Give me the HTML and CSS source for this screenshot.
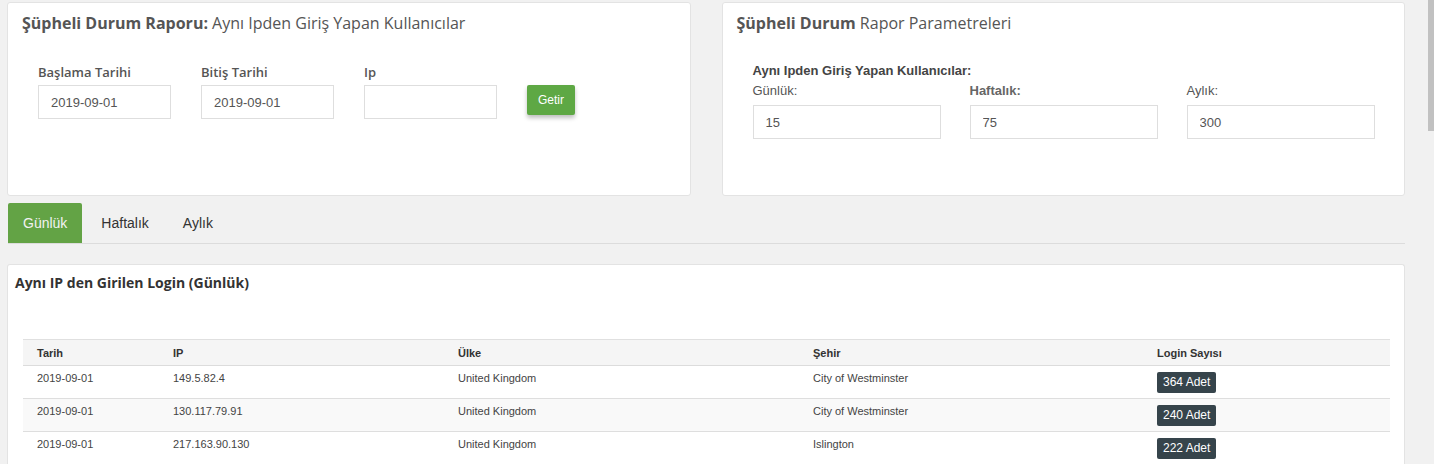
FILE: index.html
```html
<!DOCTYPE html>
<html lang="tr">
<head>
<meta charset="utf-8">
<title>Şüpheli Durum Raporu</title>
<link rel="stylesheet" href="styles.css">
</head>
<body>
  <div class="page">
    <div class="main">
      <div class="top-row">
        <div class="panel">
          <h3 class="panel-title"><strong>Şüpheli Durum Raporu:</strong> Aynı Ipden Giriş Yapan Kullanıcılar</h3>
          <form class="filter-form">
            <div class="form-group">
              <label for="start">Başlama Tarihi</label>
              <input type="text" id="start" value="2019-09-01">
            </div>
            <div class="form-group">
              <label for="end">Bitiş Tarihi</label>
              <input type="text" id="end" value="2019-09-01">
            </div>
            <div class="form-group">
              <label for="ip">Ip</label>
              <input type="text" id="ip" value="">
            </div>
            <button type="button" class="btn-getir">Getir</button>
          </form>
        </div>

        <div class="panel">
          <h3 class="panel-title"><strong>Şüpheli Durum</strong> Rapor Parametreleri</h3>
          <div class="params">
            <div class="params-title">Aynı Ipden Giriş Yapan Kullanıcılar:</div>
            <div class="params-row">
              <div class="param">
                <label for="daily">Günlük:</label>
                <input type="text" id="daily" value="15">
              </div>
              <div class="param">
                <label for="weekly" class="strong">Haftalık:</label>
                <input type="text" id="weekly" value="75">
              </div>
              <div class="param">
                <label for="monthly">Aylık:</label>
                <input type="text" id="monthly" value="300">
              </div>
            </div>
          </div>
        </div>
      </div>

      <ul class="tabs">
        <li class="active"><a href="#">Günlük</a></li>
        <li><a href="#">Haftalık</a></li>
        <li><a href="#">Aylık</a></li>
      </ul>

      <div class="panel table-panel">
        <h4 class="table-title">Aynı IP den Girilen Login (Günlük)</h4>
        <table class="report">
          <thead>
            <tr>
              <th class="c-date">Tarih</th>
              <th class="c-ip">IP</th>
              <th class="c-country">Ülke</th>
              <th class="c-city">Şehir</th>
              <th>Login Sayısı</th>
            </tr>
          </thead>
          <tbody>
            <tr>
              <td>2019-09-01</td>
              <td>149.5.82.4</td>
              <td>United Kingdom</td>
              <td>City of Westminster</td>
              <td><span class="badge">364 Adet</span></td>
            </tr>
            <tr>
              <td>2019-09-01</td>
              <td>130.117.79.91</td>
              <td>United Kingdom</td>
              <td>City of Westminster</td>
              <td><span class="badge">240 Adet</span></td>
            </tr>
            <tr>
              <td>2019-09-01</td>
              <td>217.163.90.130</td>
              <td>United Kingdom</td>
              <td>Islington</td>
              <td><span class="badge">222 Adet</span></td>
            </tr>
          </tbody>
        </table>
      </div>
    </div>
    <div class="scrollbar"><div class="thumb"></div></div>
  </div>
</body>
</html>
```
FILE: styles.css
```css
body {
    margin: 0;
    background-color: #f1f1f1;
    font-family: "Liberation Sans", Arial, sans-serif;
    color: #555;
}

.page {
    display: flex;
    height: 464px;
    overflow: hidden;
}

.main {
    flex: 1;
    padding: 2px 23px 0 7px;
}

.scrollbar {
    width: 6px;
    background-color: #f1f1f1;
}

.scrollbar .thumb {
    height: 131px;
    background-color: #c1c1c1;
}

.top-row {
    display: flex;
    gap: 31px;
}

.panel {
    background-color: #fff;
    border: 1px solid #e3e3e3;
    border-radius: 3px;
    box-sizing: border-box;
}

.top-row .panel {
    flex: 1;
    height: 194px;
    padding: 9px 14px;
}

.panel-title {
    margin: 0;
    font-family: "Open Sans", sans-serif;
    font-size: 16px;
    font-weight: normal;
    line-height: 22px;
    color: #555;
}

.panel-title strong {
    font-weight: bold;
}

.filter-form {
    display: flex;
    align-items: flex-start;
    gap: 30px;
    margin-top: 29px;
    padding-left: 16px;
}

.form-group label {
    display: block;
    font-family: "Open Sans", sans-serif;
    font-size: 13px;
    font-weight: 600;
    line-height: 18px;
    margin-bottom: 4px;
    color: #555;
}

input {
    display: block;
    box-sizing: border-box;
    height: 34px;
    border: 1px solid #dedede;
    padding: 0 12px;
    font-family: "Liberation Sans", Arial, sans-serif;
    font-size: 13px;
    color: #555;
    outline: none;
}

.form-group input {
    width: 133px;
}

.btn-getir {
    margin-top: 22px;
    width: 48px;
    height: 30px;
    border: none;
    border-radius: 2px;
    background-color: #5ea844;
    color: #fff;
    font-family: "Liberation Sans", Arial, sans-serif;
    font-size: 12px;
    box-shadow: 0 3px 4px rgba(0, 0, 0, 0.25);
}

.params {
    margin-top: 28px;
    padding-left: 16px;
}

.params-title {
    font-size: 13px;
    font-weight: bold;
    line-height: 18px;
    color: #444;
}

.params-row {
    display: flex;
    gap: 30px;
    margin-top: 2px;
}

.param {
    width: 187px;
}

.param label {
    display: block;
    font-size: 13px;
    line-height: 18px;
    margin-bottom: 5px;
    color: #555;
}

.param label.strong {
    font-weight: bold;
    color: #666;
}

.param input {
    width: 188px;
}

.tabs {
    display: flex;
    list-style: none;
    margin: 7px 0 20px 1px;
    padding: 0;
    border-bottom: 1px solid #dcdcdc;
}

.tabs li {
    margin-right: 4px;
}

.tabs a {
    display: block;
    height: 40px;
    line-height: 40px;
    padding: 0 15px;
    font-size: 14px;
    color: #333;
    text-decoration: none;
}

.tabs li.active a {
    background-color: #63a345;
    color: #f2f2f2;
    border-radius: 2px 2px 0 0;
}

.table-panel {
    padding: 8px 14px 0 7px;
    height: 210px;
    border-bottom: none;
}

.table-title {
    margin: 0 0 46px;
    font-family: "Open Sans", sans-serif;
    font-size: 14px;
    font-weight: bold;
    line-height: 20px;
    color: #333;
}

.report {
    width: calc(100% - 8px);
    margin-left: 8px;
    border-collapse: collapse;
    font-size: 11px;
    color: #444;
}

.report th {
    text-align: left;
    height: 25px;
    padding: 0 14px;
    background-color: #f5f5f5;
    border-top: 1px solid #e0e0e0;
    border-bottom: 1px solid #dcdcdc;
    color: #333;
}

.report td {
    height: 33px;
    padding: 6px 14px 0;
    vertical-align: top;
    border-bottom: 1px solid #dedede;
    box-sizing: border-box;
}

.report tbody tr:nth-child(2) td {
    background-color: #f9f9f9;
}

.c-date { width: 108px; }
.c-ip { width: 257px; }
.c-country { width: 327px; }
.c-city { width: 316px; }

.badge {
    display: inline-block;
    background-color: #36444b;
    color: #fff;
    font-size: 12px;
    line-height: 21px;
    padding: 0 6px;
    border-radius: 2px;
}
```
